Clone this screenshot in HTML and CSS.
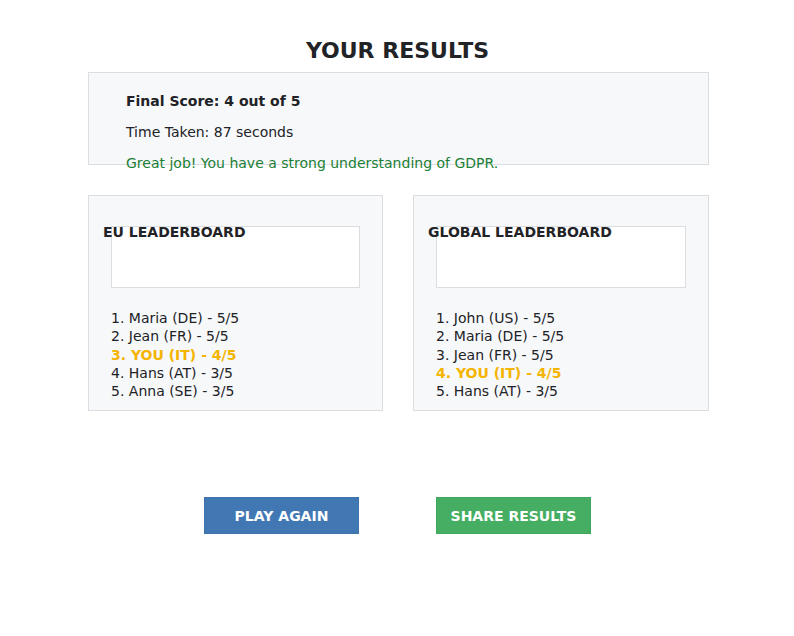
FILE: index.html
```html
<!DOCTYPE html>
<html>
<head>
<meta charset="utf-8">
<link rel="stylesheet" href="styles.css">
</head>
<body>
<main class="page">
  <h1 class="title">YOUR RESULTS</h1>
  <section class="summary">
    <p class="score">Final Score: 4 out of 5</p>
    <p class="time">Time Taken: 87 seconds</p>
    <p class="feedback">Great job! You have a strong understanding of GDPR.</p>
  </section>
  <div class="boards">
    <section class="board">
      <h2 class="board-title">EU LEADERBOARD</h2>
      <div class="chart"></div>
      <ol class="ranks">
        <li>1. Maria (DE) - 5/5</li>
        <li>2. Jean (FR) - 5/5</li>
        <li class="you">3. YOU (IT) - 4/5</li>
        <li>4. Hans (AT) - 3/5</li>
        <li>5. Anna (SE) - 3/5</li>
      </ol>
    </section>
    <section class="board">
      <h2 class="board-title">GLOBAL LEADERBOARD</h2>
      <div class="chart"></div>
      <ol class="ranks">
        <li>1. John (US) - 5/5</li>
        <li>2. Maria (DE) - 5/5</li>
        <li>3. Jean (FR) - 5/5</li>
        <li class="you">4. YOU (IT) - 4/5</li>
        <li>5. Hans (AT) - 3/5</li>
      </ol>
    </section>
  </div>
  <div class="actions">
    <button class="btn btn-play">PLAY AGAIN</button>
    <button class="btn btn-share">SHARE RESULTS</button>
  </div>
</main>
</body>
</html>
```
FILE: styles.css
```css
* { box-sizing: border-box; }
html, body { margin: 0; padding: 0; background: #fff; }
body {
  font-family: "DejaVu Sans", "Noto Sans", sans-serif;
  color: #212226;
}
.page {
  width: 621px;
  margin-left: 88px;
  padding-top: 37px;
  display: flex;
  flex-direction: column;
}
.title {
  margin: 0 0 7px;
  padding-right: 2px;
  font-size: 22px;
  line-height: 28px;
  font-weight: bold;
  text-align: center;
  color: #222326;
}
.summary {
  height: 93px;
  background: #f7f8fa;
  border: 1px solid #dcdde0;
  padding: 20px 37px 0;
}
.summary p {
  margin: 0 0 14px;
  font-size: 14px;
  line-height: 17px;
}
.score { font-weight: bold; }
.feedback { color: #1b7f36; }
.boards {
  margin-top: 30px;
  display: grid;
  grid-template-columns: 295px 296px;
  column-gap: 30px;
}
.board {
  height: 216px;
  background: #f7f8fa;
  border: 1px solid #dcdde0;
  padding: 28px 22px 0;
}
.board-title {
  position: relative;
  margin: 0 0 -14px -8px;
  font-size: 14px;
  line-height: 16px;
  font-weight: bold;
  color: #222326;
}
.chart {
  height: 62px;
  background: #fff;
  border: 1px solid #dcdde0;
}
.ranks {
  list-style: none;
  margin: 21px 0 0;
  padding: 0;
  font-size: 14px;
  line-height: 18.25px;
}
.ranks .you {
  color: #f4b400;
  font-weight: bold;
}
.actions {
  margin-top: 86px;
  padding-right: 2px;
  display: flex;
  justify-content: center;
  gap: 77px;
}
.btn {
  width: 155px;
  height: 37px;
  border: 1px solid rgba(0,0,0,0.04);
  border-radius: 0;
  color: #fff;
  font-family: "DejaVu Sans", sans-serif;
  font-size: 14px;
  font-weight: bold;
  cursor: pointer;
}
.btn-play { background: #4178b4; }
.btn-share { background: #45ae62; }
```
